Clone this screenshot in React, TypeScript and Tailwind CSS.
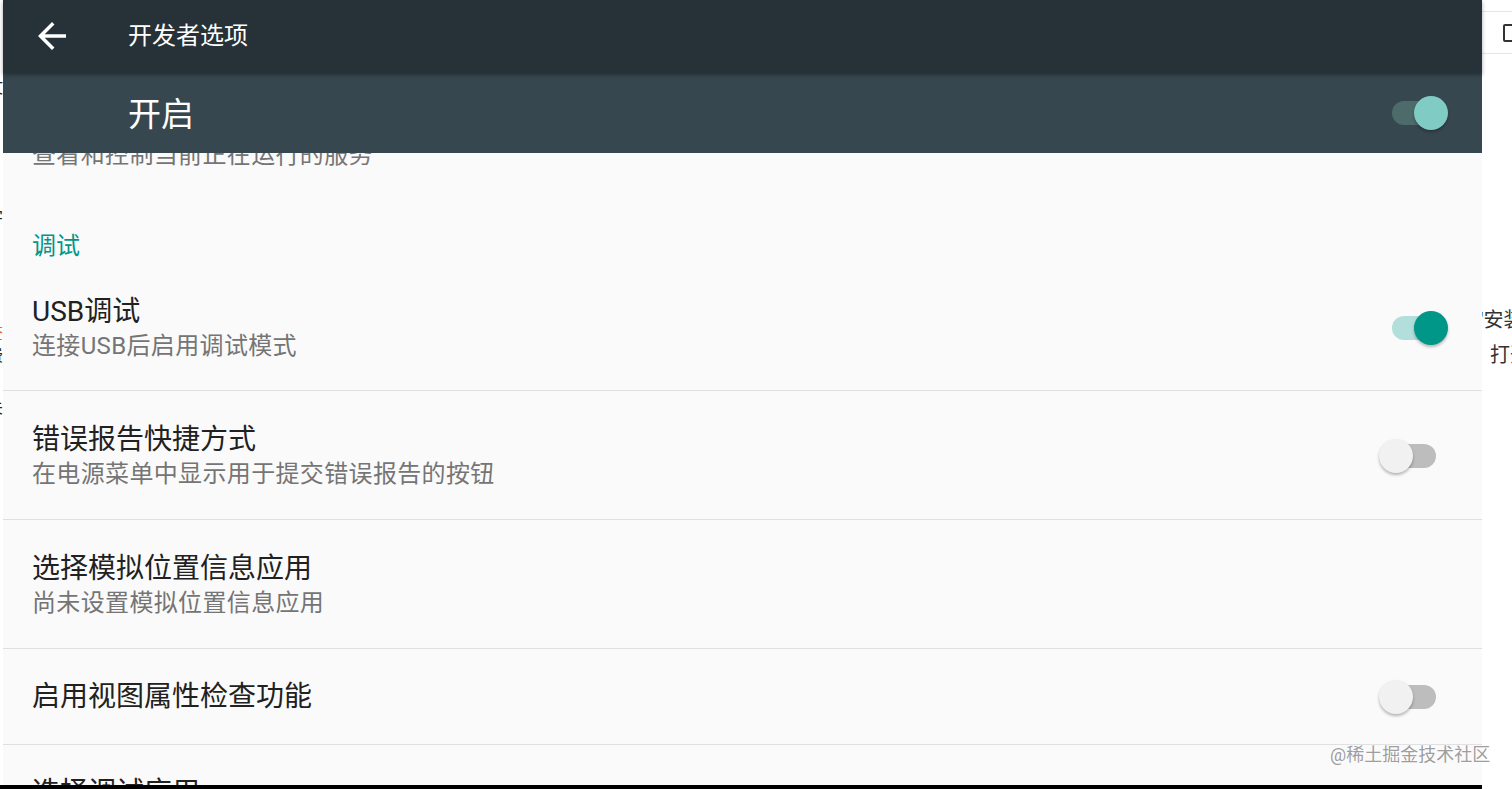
const font = "font-['Roboto','Noto_Sans_CJK_SC',sans-serif]";

function Switch({ on, dark = false }: { on: boolean; dark?: boolean }) {
  const track = dark
    ? "bg-[#4d6b6a] w-[48px]"
    : on
      ? "bg-[#b2dfdb] w-[48px]"
      : "bg-[#bdbdbd] w-[44px]";
  const thumb = dark
    ? "bg-[#80cbc4] left-[35px]"
    : on
      ? "bg-[#009688] left-[35px]"
      : "bg-[#f1f1f1] left-0";
  return (
    <div className="relative w-[69px] h-[34px] shrink-0">
      <div className={`absolute left-[13px] top-[5px] h-[24px] rounded-full ${track}`} />
      <div
        className={`absolute top-0 w-[34px] h-[34px] rounded-full shadow-[0_2px_3px_rgba(0,0,0,0.28)] ${thumb}`}
      />
    </div>
  );
}

function Row({
  title,
  summary,
  toggle,
}: {
  title: string;
  summary?: string;
  toggle?: boolean;
}) {
  return (
    <>
      <div
        className={`shrink-0 flex items-center pl-[29px] pr-[34px] ${summary ? "pt-[31px] pb-[29px]" : "pt-[30px] pb-[29px]"}`}
      >
        <div className="flex-1 flex flex-col">
          <span className="text-[28px] leading-[36px] text-[#212121]">{title}</span>
          {summary && (
            <span className="text-[24px] leading-[32px] tracking-[0.35px] text-[#757575]">{summary}</span>
          )}
        </div>
        {toggle !== undefined && <Switch on={toggle} />}
      </div>
      <div className="shrink-0 h-px bg-[#e0e0e0]" />
    </>
  );
}

export default function App() {
  return (
    <div className={`relative w-[1512px] h-[789px] overflow-hidden bg-white ${font}`}>
      <div className="flex h-[785px]">
        {/* left sliver of the page behind */}
        <div className="w-[3px] overflow-hidden flex flex-col items-end text-[16px] leading-[20px] text-[#222]">
          <span className="mt-[78px] whitespace-nowrap">文</span>
          <span className="mt-[110px] whitespace-nowrap">字</span>
          <span className="mt-[96px] whitespace-nowrap text-[#f06a1d]">查</span>
          <span className="mt-[2px] whitespace-nowrap">费</span>
          <span className="mt-[32px] whitespace-nowrap">关</span>
        </div>

        {/* settings panel */}
        <div className="w-[1479px] flex flex-col bg-[#fafafa]">
          <div className="relative z-10 h-[73px] shrink-0 flex items-center bg-[#263238] shadow-[0_2px_4px_rgba(0,0,0,0.35)]">
            <svg viewBox="0 0 24 24" className="ml-[28px] mt-[-2px] w-[42px] h-[42px]" fill="#ffffff">
              <path d="M20 11H7.83l5.59-5.59L12 4l-8 8 8 8 1.41-1.41L7.83 13H20v-2z" />
            </svg>
            <span className="ml-[55px] -mt-[2px] text-[24px] leading-[32px] text-white">开发者选项</span>
          </div>
          <div className="h-[80px] shrink-0 flex items-center pl-[125px] pr-[34px] bg-[#37474f]">
            <span className="flex-1 mt-[4px] text-[33px] leading-[40px] text-white">开启</span>
            <Switch on dark />
          </div>

          <div className="flex-1 overflow-hidden flex flex-col">
            <span className="shrink-0 -mt-[14px] pl-[29px] text-[24px] leading-[32px] tracking-[0.35px] text-[#757575]">
              查看和控制当前正在运行的服务
            </span>
            <span className="shrink-0 mt-[59px] pl-[29px] text-[24px] leading-[32px] text-[#009688]">调试</span>
            <div className="shrink-0 flex items-center mt-[32px] pl-[29px] pr-[34px] pb-[28px]">
              <div className="flex-1 flex flex-col">
                <span className="text-[28px] leading-[36px] text-[#212121]">USB调试</span>
                <span className="text-[24px] leading-[32px] tracking-[0.35px] text-[#757575]">连接USB后启用调试模式</span>
              </div>
              <Switch on />
            </div>
            <div className="shrink-0 h-px bg-[#e0e0e0]" />
            <Row title="错误报告快捷方式" summary="在电源菜单中显示用于提交错误报告的按钮" toggle={false} />
            <Row title="选择模拟位置信息应用" summary="尚未设置模拟位置信息应用" />
            <Row title="启用视图属性检查功能" toggle={false} />
            <Row title="选择调试应用" />
          </div>
        </div>

        {/* right sliver of the page behind */}
        <div className="w-[30px] overflow-hidden flex flex-col bg-white">
          <div className="mt-[11px] h-[43px] border-y border-[#e6e6e6] flex items-center">
            <div className="ml-[21px] w-[14px] h-[18px] border-2 border-[#333] rounded-[2px] shrink-0" />
          </div>
          <span className="mt-[252px] whitespace-nowrap text-[20px] leading-[28px] text-[#333] -ml-[2px]">'安装</span>
          <span className="mt-[7px] whitespace-nowrap text-[20px] leading-[28px] text-[#333] -ml-[12px]">讠打开</span>
        </div>
      </div>
      <div className="h-[4px] w-[1482px] bg-black" />

      <span className="absolute left-[1330px] top-[743px] text-[18px] leading-[24px] text-[#9e9e9e] whitespace-nowrap [text-shadow:0_0_2px_#fff,0_0_2px_#fff]">
        @稀土掘金技术社区
      </span>
    </div>
  );
}
